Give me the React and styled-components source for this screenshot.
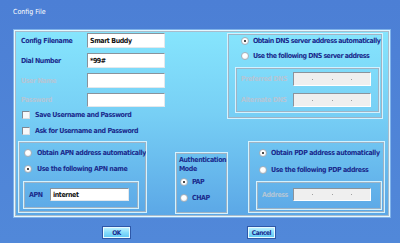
import React from "react";
import styled, { createGlobalStyle } from "styled-components";

const GlobalStyle = createGlobalStyle`
	html, body {
		margin: 0;
		padding: 0;
		background: #4f83d7;
	}
	* {
		box-sizing: border-box;
	}
`;

const NARROW = `"DejaVu Sans Condensed", "Liberation Sans", sans-serif`;

const Window = styled.div`
	width: 400px;
	height: 243px;
	display: flex;
	flex-direction: column;
	background: linear-gradient(#4c7fd5, #5188d9);
	font-family: ${NARROW};
	font-weight: bold;
	font-size: 7px;
	letter-spacing: -0.4px;
	color: #1a2a8c;
	overflow: hidden;
`;

const TitleBar = styled.div`
	height: 30px;
	padding: 7px 0 0 13px;
	font-weight: normal;
	font-size: 7px;
	letter-spacing: 0;
	line-height: 10px;
	color: #ffffff;
`;

const Panel = styled.div`
	margin-left: 14px;
	width: 376px;
	height: 187px;
	padding: 2px 4px 2px 3px;
	display: flex;
	flex-direction: column;
	border: 1px solid #e6f8ff;
	box-shadow: 0 0 0 1px #7fb2ea, inset 0 0 0 1px #a9bccb;
	background: linear-gradient(#86e5fd 0%, #77cff5 45%, #5ba7e6 100%);
`;

const TopRow = styled.div`
	display: flex;
	justify-content: space-between;
`;

const LeftForm = styled.div`
	padding-left: 3px;
	display: flex;
	flex-direction: column;
`;

const FieldRow = styled.div`
	display: grid;
	grid-template-columns: ${p => p.$labelWidth}px ${p => p.$inputWidth}px;
	align-items: center;
	height: ${p => p.$height || 15}px;
	margin-top: ${p => p.$gap || 0}px;
`;

const Label = styled.span`
	white-space: nowrap;
	color: ${p => (p.$disabled ? "#b4c6d6" : "#1a2a8c")};
`;

const TextInput = styled.div`
	height: 100%;
	padding: 0 2px;
	display: flex;
	align-items: center;
	background: #ffffff;
	border-top: 1px solid #8a939c;
	border-left: 1px solid #8a939c;
	border-bottom: 1px solid #e4e8ec;
	border-right: 1px solid #e4e8ec;
	color: #111111;
	white-space: nowrap;
`;

const IpInput = styled.div`
	height: 100%;
	display: flex;
	justify-content: space-evenly;
	align-items: center;
	background: #efefef;
	border-top: 1px solid #8a939c;
	border-left: 1px solid #8a939c;
	border-bottom: 1px solid #ffffff;
	border-right: 1px solid #ffffff;
`;

const IpDot = styled.span`
	width: 1px;
	height: 1px;
	background: #a0a0a0;
`;

const CheckRow = styled.div`
	display: flex;
	align-items: center;
	gap: 5px;
	height: 10px;
	padding-left: 1px;
	margin-top: ${p => p.$gap}px;
	white-space: nowrap;
`;

const CheckBox = styled.span`
	width: 8px;
	height: 8px;
	background: #f6f8fa;
	border-top: 1px solid #7d8894;
	border-left: 1px solid #7d8894;
	border-bottom: 1px solid #d8dde2;
	border-right: 1px solid #d8dde2;
`;

const GroupBox = styled.div`
	position: relative;
	width: ${p => p.$width}px;
	height: ${p => p.$height}px;
	margin-top: ${p => p.$top || 0}px;
	margin-left: ${p => p.$left || 0}px;
	margin-right: ${p => p.$right || 0}px;
	padding: ${p => p.$pad || "0"};
	border: 1px solid #d4f2ff;
	box-shadow: inset 0 0 0 1px #9fb3c4;
	overflow: hidden;
	flex-shrink: 0;
`;

const RadioRow = styled.div`
	display: flex;
	align-items: center;
	gap: ${p => p.$space || 5}px;
	height: 10px;
	padding-left: ${p => p.$indent}px;
	margin-top: ${p => p.$gap || 0}px;
	white-space: nowrap;
	${p => p.$tight && "letter-spacing: -0.5px;"}
`;

const RadioCircle = styled.span`
	position: relative;
	width: 8px;
	height: 8px;
	border-radius: 50%;
	flex-shrink: 0;
	background: radial-gradient(circle at 40% 35%, #ffffff 40%, #e4e8ec 100%);
	border: 1px solid #a7b0ba;

	${p =>
		p.$checked &&
		`
		&::after {
			content: "";
			position: absolute;
			left: 2px;
			top: 2px;
			width: 2px;
			height: 2px;
			border-radius: 50%;
			background: #111111;
		}
	`}
`;

const BottomRow = styled.div`
	display: flex;
	align-items: flex-start;
	margin-top: auto;
	height: 73px;
`;

const AuthTitle = styled.div`
	line-height: 9px;
	padding-left: 2px;
	width: 60px;
`;

const ButtonRow = styled.div`
	display: flex;
	gap: 116px;
	padding-left: 102px;
	margin-top: 9px;
`;

const Button = styled.div`
	width: 29px;
	height: 13px;
	display: flex;
	justify-content: center;
	align-items: center;
	font-size: 6.5px;
	color: #1a2a8c;
	background: linear-gradient(#c6f6ff, #86dcfb 50%, #5ec6f4);
	border: 1px solid #2e58a8;
	box-shadow: inset 0 0 0 1px #e8fbff;
`;

function Radio({ checked, indent, gap, space, tight, children }) {
	return (
		<RadioRow $indent={indent} $gap={gap} $space={space} $tight={tight}>
			<RadioCircle $checked={checked} />
			<span>{children}</span>
		</RadioRow>
	);
}

function IpField() {
	return (
		<IpInput>
			<IpDot />
			<IpDot />
			<IpDot />
		</IpInput>
	);
}

export default function App() {
	return (
		<>
			<GlobalStyle />
			<Window>
				<TitleBar>Config File</TitleBar>
				<Panel>
					<TopRow>
						<LeftForm>
							<FieldRow $labelWidth={66} $inputWidth={78}>
								<Label>Config Filename</Label>
								<TextInput>Smart Buddy</TextInput>
							</FieldRow>
							<FieldRow $labelWidth={66} $inputWidth={78} $gap={5}>
								<Label>Dial Number</Label>
								<TextInput>*99#</TextInput>
							</FieldRow>
							<FieldRow $labelWidth={66} $inputWidth={78} $gap={5}>
								<Label $disabled>User Name</Label>
								<TextInput />
							</FieldRow>
							<FieldRow $labelWidth={66} $inputWidth={78} $gap={5} $height={14}>
								<Label $disabled>Password</Label>
								<TextInput />
							</FieldRow>
							<CheckRow $gap={3}>
								<CheckBox />
								<span>Save Username and Password</span>
							</CheckRow>
							<CheckRow $gap={6}>
								<CheckBox />
								<span>Ask for Username and Password</span>
							</CheckRow>
						</LeftForm>

						<GroupBox $width={156} $height={86} $pad="2px 0 0 0" $right={2}>
							<Radio checked indent={13} space={4} tight>
								Obtain DNS server address automatically
							</Radio>
							<Radio indent={13} gap={5} space={4} tight>
								Use the following DNS server address
							</Radio>
							<GroupBox $width={145} $height={46} $top={6} $left={7} $pad="4px 0 0 5px">
								<FieldRow $labelWidth={52} $inputWidth={78} $height={14}>
									<Label $disabled>Preferred DNS</Label>
									<IpField />
								</FieldRow>
								<FieldRow $labelWidth={52} $inputWidth={78} $height={14} $gap={7}>
									<Label $disabled>Alternate DNS</Label>
									<IpField />
								</FieldRow>
							</GroupBox>
						</GroupBox>
					</TopRow>

					<BottomRow>
						<GroupBox $width={129} $height={72} $pad="6px 0 0 0">
							<Radio indent={5}>Obtain APN address automatically</Radio>
							<Radio checked indent={5} gap={6}>
								Use the following APN name
							</Radio>
							<GroupBox $width={116} $height={28} $top={7} $left={4} $pad="6px 0 0 5px">
								<FieldRow $labelWidth={21} $inputWidth={79} $height={13}>
									<Label>APN</Label>
									<TextInput>internet</TextInput>
								</FieldRow>
							</GroupBox>
						</GroupBox>

						<GroupBox $width={53} $height={62} $top={11} $left={28} $pad="3px 0 0 1px">
							<AuthTitle>Authentication Mode</AuthTitle>
							<Radio checked indent={3} gap={3} space={4}>
								PAP
							</Radio>
							<Radio indent={3} gap={6} space={4}>
								CHAP
							</Radio>
						</GroupBox>

						<GroupBox $width={137} $height={72} $left={20} $pad="6px 0 0 0">
							<Radio checked indent={10} space={4}>
								Obtain PDP address automatically
							</Radio>
							<Radio indent={10} gap={7} space={4}>
								Use the following PDP address
							</Radio>
							<GroupBox $width={126} $height={29} $top={6} $left={7} $pad="6px 0 0 5px">
								<FieldRow $labelWidth={31} $inputWidth={78} $height={13}>
									<Label $disabled>Address</Label>
									<IpField />
								</FieldRow>
							</GroupBox>
						</GroupBox>
					</BottomRow>
				</Panel>
				<ButtonRow>
					<Button>OK</Button>
					<Button>Cancel</Button>
				</ButtonRow>
			</Window>
		</>
	);
}
